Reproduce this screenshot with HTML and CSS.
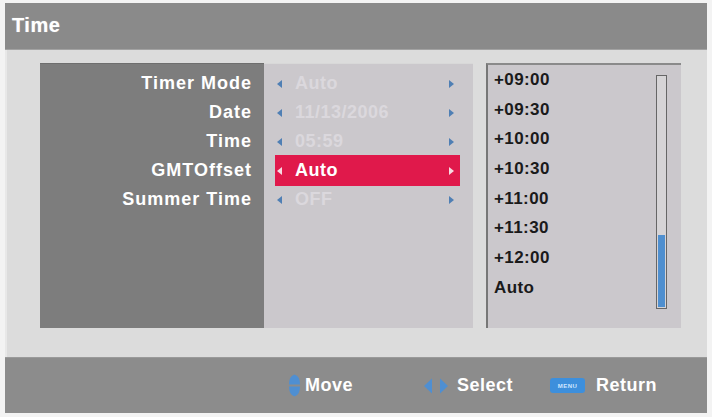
FILE: index.html
```html
<!DOCTYPE html>
<html>
<head>
<meta charset="utf-8">
<link rel="stylesheet" href="styles.css">
</head>
<body>
<div class="frame">
  <div class="titlebar"><span class="title">Time</span></div>
  <div class="content">
    <div class="labels">
      <div class="row">Timer Mode</div>
      <div class="row">Date</div>
      <div class="row">Time</div>
      <div class="row">GMTOffset</div>
      <div class="row">Summer Time</div>
    </div>
    <div class="values">
      <div class="vrow"><span class="arr-l"></span><span class="val">Auto</span><span class="arr-r"></span></div>
      <div class="vrow"><span class="arr-l"></span><span class="val">11/13/2006</span><span class="arr-r"></span></div>
      <div class="vrow"><span class="arr-l"></span><span class="val">05:59</span><span class="arr-r"></span></div>
      <div class="vrow active"><span class="arr-l"></span><span class="val">Auto</span><span class="arr-r"></span></div>
      <div class="vrow"><span class="arr-l"></span><span class="val">OFF</span><span class="arr-r"></span></div>
    </div>
    <div class="list">
      <div class="items">
        <div class="item">+09:00</div>
        <div class="item">+09:30</div>
        <div class="item">+10:00</div>
        <div class="item">+10:30</div>
        <div class="item">+11:00</div>
        <div class="item">+11:30</div>
        <div class="item">+12:00</div>
        <div class="item">Auto</div>
      </div>
      <div class="scroll"><div class="thumb"></div></div>
    </div>
  </div>
  <div class="footer">
    <div class="hint hint-move">
      <svg class="ico-ud" width="13" height="23" viewBox="0 0 13 23">
        <path d="M1 10.5 Q1 2 6.5 0.5 Q12 2 12 10.5 Z" fill="#4f8fd2"/>
        <path d="M1 12.5 Q1 21 6.5 22.5 Q12 21 12 12.5 Z" fill="#4f8fd2"/>
      </svg>
      <span>Move</span>
    </div>
    <div class="hint hint-select">
      <svg class="ico-lr" width="26" height="16" viewBox="0 0 26 16">
        <path d="M9 0.5 L1 8 L9 15.5 Z" fill="#4f8fd2"/>
        <path d="M17 0.5 L25 8 L17 15.5 Z" fill="#4f8fd2"/>
      </svg>
      <span>Select</span>
    </div>
    <div class="hint hint-return">
      <span class="menu-badge">MENU</span>
      <span>Return</span>
    </div>
  </div>
</div>
</body>
</html>
```
FILE: styles.css
```css
html, body {
  margin: 0;
  padding: 0;
  background: #f3f3f3;
}
body {
  font-family: "Liberation Sans", Arial, sans-serif;
  font-weight: bold;
}
.frame {
  width: 702px;
  margin: 3px 0 0 5px;
  display: flex;
  flex-direction: column;
}
.titlebar {
  height: 47px;
  background: #8a8a8a;
  border-bottom: 1px solid #a2a2a2;
  box-sizing: border-box;
  display: flex;
  align-items: center;
  padding-left: 7px;
}
.title {
  color: #fff;
  font-size: 20px;
  letter-spacing: 0.5px;
  text-shadow: 0 0 1px #ccc;
  margin-top: -2px;
}
.content {
  height: 307px;
  background: #dcdcdc;
  border-left: 2px solid #e8e8e8;
  box-sizing: border-box;
  padding: 13px 0 0 33px;
  display: flex;
  align-items: flex-start;
}
.labels {
  width: 224px;
  height: 265px;
  background: #7d7d7d;
  box-sizing: border-box;
  padding: 5px 12px 0 0;
  border-top: 1px solid #6e6e6e;
}
.row {
  height: 29px;
  display: flex;
  align-items: center;
  justify-content: flex-end;
  color: #fff;
  font-size: 18px;
  letter-spacing: 1px;
}
.values {
  width: 209px;
  height: 265px;
  background: #cbc8cc;
  box-sizing: border-box;
  padding: 5px 0 0 11px;
  border-top: 1px solid #d8d8d8;
}
.vrow {
  width: 185px;
  height: 29px;
  display: flex;
  align-items: center;
  box-sizing: border-box;
  padding-left: 2px;
  color: #dbd8dd;
  font-size: 18px;
  letter-spacing: 0.5px;
}
.vrow.active {
  background: #e0194b;
  color: #fff;
  height: 31px;
  margin: -1px 0;
}
.val {
  margin-left: 13px;
  flex: 1;
}
.arr-l, .arr-r {
  width: 0;
  height: 0;
  border-top: 4px solid transparent;
  border-bottom: 4px solid transparent;
}
.arr-l {
  border-right: 5px solid #4f7fb4;
}
.arr-r {
  border-left: 5px solid #4f7fb4;
  margin-right: 6px;
}
.vrow.active .arr-l {
  border-right-color: #f6dbe2;
}
.vrow.active .arr-r {
  border-left-color: #f6dbe2;
}
.list {
  margin-left: 13px;
  width: 195px;
  height: 265px;
  background: #cbc8cc;
  box-sizing: border-box;
  border-left: 2px solid #777;
  border-top: 2px solid #8a8a8a;
  display: flex;
}
.items {
  flex: 1;
  padding-left: 6px;
}
.item {
  height: 29.7px;
  display: flex;
  align-items: center;
  color: #1a1a1a;
  font-size: 17px;
  letter-spacing: 0.4px;
}
.scroll {
  margin: 10px 14px 0 0;
  width: 11px;
  height: 234px;
  box-sizing: border-box;
  border: 1px solid #666;
  background: #d6d4d6;
  display: flex;
  flex-direction: column;
  justify-content: flex-end;
  padding: 1px;
}
.thumb {
  height: 72px;
  background: #4f8fcf;
}
.footer {
  height: 56px;
  background: #8c8c8c;
  border-top: 1px solid #9a9a9a;
  box-sizing: border-box;
  display: flex;
  align-items: center;
  padding-left: 283px;
  color: #fff;
  font-size: 18px;
  letter-spacing: 0.5px;
}
.hint {
  display: flex;
  align-items: center;
}
.hint-move span {
  margin-left: 4px;
}
.hint-select {
  margin-left: 70px;
}
.hint-select span {
  margin-left: 8px;
}
.hint-return {
  margin-left: 37px;
}
.hint-return span:last-child {
  margin-left: 11px;
}
.menu-badge {
  width: 35px;
  height: 15px;
  border-radius: 3px;
  background: #3d8fdc;
  color: #cfe6ff;
  font-size: 6px;
  letter-spacing: 0.5px;
  display: flex;
  align-items: center;
  justify-content: center;
}
```
